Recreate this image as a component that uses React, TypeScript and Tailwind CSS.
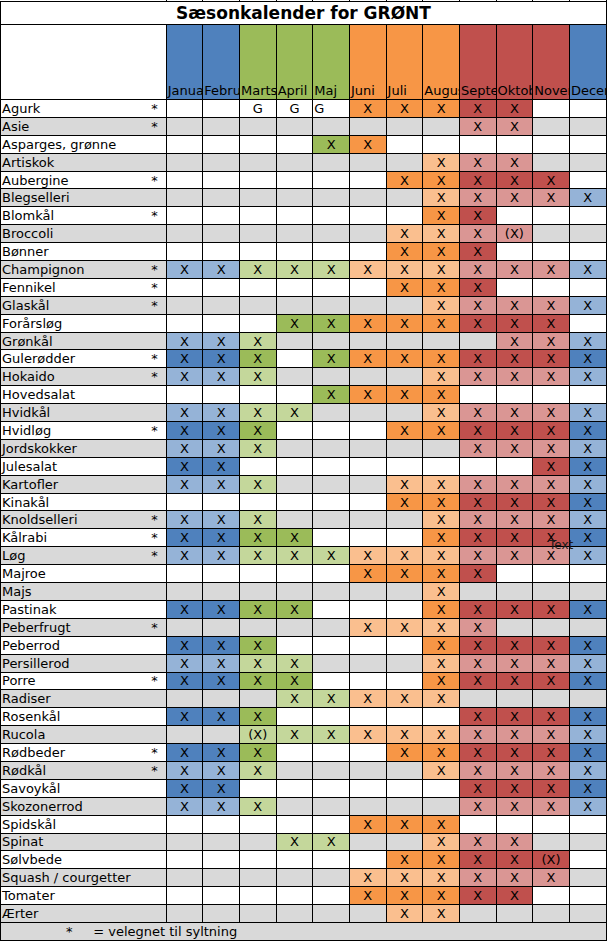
const months = [
  "Januar",
  "Februar",
  "Marts",
  "April",
  "Maj",
  "Juni",
  "Juli",
  "August",
  "September",
  "Oktober",
  "November",
  "December",
]

// season colours per month: winter blue, spring green, summer orange, autumn red
const strong = [
  "bg-[#4f81bd]",
  "bg-[#4f81bd]",
  "bg-[#9bbb59]",
  "bg-[#9bbb59]",
  "bg-[#9bbb59]",
  "bg-[#f79646]",
  "bg-[#f79646]",
  "bg-[#f79646]",
  "bg-[#c0504d]",
  "bg-[#c0504d]",
  "bg-[#c0504d]",
  "bg-[#4f81bd]",
]

const soft = [
  "bg-[#95b3d7]",
  "bg-[#95b3d7]",
  "bg-[#c4d79b]",
  "bg-[#c4d79b]",
  "bg-[#c4d79b]",
  "bg-[#fabf8f]",
  "bg-[#fabf8f]",
  "bg-[#fabf8f]",
  "bg-[#da9694]",
  "bg-[#da9694]",
  "bg-[#da9694]",
  "bg-[#95b3d7]",
]

// . = empty, X = in season, ( = "(X)", G = centered G, L = left aligned G
const rows: { name: string; star?: boolean; cells: string }[] = [
  { name: "Agurk", star: true, cells: "..GGLXXXXX.." },
  { name: "Asie", star: true, cells: "........XX.." },
  { name: "Asparges, grønne", cells: "....XX......" },
  { name: "Artiskok", cells: ".......XXX.." },
  { name: "Aubergine", star: true, cells: "......XXXXX." },
  { name: "Blegselleri", cells: ".......XXXXX" },
  { name: "Blomkål", star: true, cells: ".......XX..." },
  { name: "Broccoli", cells: "......XXX(.." },
  { name: "Bønner", cells: "......XXX..." },
  { name: "Champignon", star: true, cells: "XXXXXXXXXXXX" },
  { name: "Fennikel", star: true, cells: "......XXX..." },
  { name: "Glaskål", star: true, cells: ".......XXXXX" },
  { name: "Forårsløg", cells: "...XXXXXXXX." },
  { name: "Grønkål", cells: "XXX......XXX" },
  { name: "Gulerødder", star: true, cells: "XXX.XXXXXXXX" },
  { name: "Hokaido", star: true, cells: "XXX....XXXXX" },
  { name: "Hovedsalat", cells: "....XXXX...." },
  { name: "Hvidkål", cells: "XXXX...XXXXX" },
  { name: "Hvidløg", star: true, cells: "XXX...XXXXXX" },
  { name: "Jordskokker", cells: "XXX.....XXXX" },
  { name: "Julesalat", cells: "XX........XX" },
  { name: "Kartofler", cells: "XXX...XXXXXX" },
  { name: "Kinakål", cells: "......XXXXXX" },
  { name: "Knoldselleri", star: true, cells: "XXX....XXXXX" },
  { name: "Kålrabi", star: true, cells: "XXXX...XXXXX" },
  { name: "Løg", star: true, cells: "XXXXXXXXXXXX" },
  { name: "Majroe", cells: ".....XXXX..." },
  { name: "Majs", cells: ".......X...." },
  { name: "Pastinak", cells: "XXXX...XXXXX" },
  { name: "Peberfrugt", star: true, cells: ".....XXXX..." },
  { name: "Peberrod", cells: "XXX....XXXXX" },
  { name: "Persillerod", cells: "XXXX...XXXXX" },
  { name: "Porre", star: true, cells: "XXXX...XXXXX" },
  { name: "Radiser", cells: "...XXXXX...." },
  { name: "Rosenkål", cells: "XXX.....XXXX" },
  { name: "Rucola", cells: "..(XXXXXXXXX" },
  { name: "Rødbeder", star: true, cells: "XXX...XXXXXX" },
  { name: "Rødkål", star: true, cells: "XXX....XXXXX" },
  { name: "Savoykål", cells: "XX......XXXX" },
  { name: "Skozonerrod", cells: "XXX.....XXXX" },
  { name: "Spidskål", cells: ".....XXX...." },
  { name: "Spinat", cells: "...XX..XXX.." },
  { name: "Sølvbede", cells: "......XXXX(." },
  { name: "Squash / courgetter", cells: ".....XXXXXX." },
  { name: "Tomater", cells: ".....XXXXX.." },
  { name: "Ærter", cells: "......XX...." },
]

const cols = "grid grid-cols-[166.67px_repeat(12,36.67px)]"

function Cell({ code, month, shaded }: { code: string; month: number; shaded: boolean }) {
  const base = shaded ? "bg-[#d9d9d9]" : "bg-white"
  const marked = code === "X" || code === "("
  const bg = marked ? (shaded ? soft[month] : strong[month]) : base
  const left = code === "L"
  const label = code === "X" ? "X" : code === "(" ? "(X)" : code === "G" || code === "L" ? "G" : ""

  return (
    <div
      className={`flex items-center overflow-hidden whitespace-nowrap border-r border-b border-black ${bg} ${
        left ? "justify-start pl-px" : "justify-center"
      }`}
    >
      {label}
    </div>
  )
}

export default function App() {
  return (
    <div className="relative w-[607px] bg-white font-['DejaVu_Sans',sans-serif] text-[13px] leading-none text-black">
      {/* column lines peeking in from the rows above */}
      <div className={`${cols} h-px`}>
        <div className="border-r border-black" />
        {months.map((m) => (
          <div key={m} className="border-r border-black" />
        ))}
      </div>

      <div className="flex h-[24px] items-center justify-center border border-black text-[17px] font-bold">
        Sæsonkalender for GRØNT
      </div>

      {/* month header */}
      <div className={`${cols} h-[75px]`}>
        <div className="border-l border-r border-b border-black bg-white" />
        {months.map((m, i) => (
          <div
            key={m}
            className={`flex items-end overflow-hidden whitespace-nowrap border-r border-b border-black pl-px leading-[16px] ${strong[i]}`}
          >
            {m}
          </div>
        ))}
      </div>

      {rows.map((row, r) => {
        const shaded = r % 2 === 1
        return (
          <div key={row.name} className={`${cols} h-[17.9px]`}>
            <div
              className={`flex items-center justify-between overflow-hidden whitespace-nowrap border-l border-r border-b border-black pl-px pr-[8px] ${
                shaded ? "bg-[#d9d9d9]" : "bg-white"
              }`}
            >
              <span>{row.name}</span>
              {row.star && <span>*</span>}
            </div>
            {row.cells.split("").map((c, m) => (
              <Cell key={m} code={c} month={m} shaded={shaded} />
            ))}
          </div>
        )
      })}

      <div className="flex h-[18px] items-center whitespace-pre border-x border-b border-black bg-[#d9d9d9] pl-[65px]">
        {"*     = velegnet til syltning"}
      </div>

      {/* stray text box left in the sheet */}
      <div className="absolute left-[549px] top-[539px] font-['DejaVu_Sans',sans-serif] text-[12px] leading-[13px] text-[#1a1a1a]">
        Text
      </div>
    </div>
  )
}
